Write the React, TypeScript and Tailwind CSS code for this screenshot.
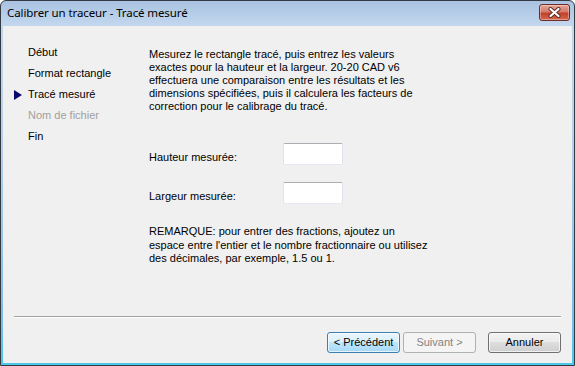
import type { ReactNode } from 'react';

const steps = [
  { label: 'Début', state: 'done' },
  { label: 'Format rectangle', state: 'done' },
  { label: 'Tracé mesuré', state: 'current' },
  { label: 'Nom de fichier', state: 'disabled' },
  { label: 'Fin', state: 'todo' },
];

function CloseButton() {
  return (
    <div className="mt-[3px] w-[31px] h-[17px] rounded-[3px] border border-[#6b2d26] bg-[linear-gradient(to_bottom,#e6a597,#d47a68_45%,#c2402c_55%,#d26a50)] flex items-center justify-center shadow-[inset_0_0_0_1px_rgba(255,255,255,0.35)]">
      <svg width="13" height="11" viewBox="0 0 13 11">
        <path d="M2.5 2 L10.5 9 M10.5 2 L2.5 9" stroke="#5a2a24" strokeWidth="4" strokeLinecap="round" />
        <path d="M2.5 2 L10.5 9 M10.5 2 L2.5 9" stroke="#ffffff" strokeWidth="2.2" strokeLinecap="round" />
      </svg>
    </div>
  );
}

function WinButton({ children, variant }: { children: ReactNode; variant: 'default' | 'disabled' | 'normal' }) {
  const cls =
    variant === 'default'
      ? 'border-[#3c7fb1] bg-[linear-gradient(to_bottom,#eaf6fd,#d9f0fc_50%,#bee6fd_50%,#a7d9f5)] text-black shadow-[inset_0_0_0_1px_rgba(255,255,255,0.7)]'
      : variant === 'disabled'
      ? 'border-[#adb2b5] bg-[#f4f4f4] text-[#838383]'
      : 'border-[#707070] bg-[linear-gradient(to_bottom,#f2f2f2,#ebebeb_50%,#dddddd_50%,#cfcfcf)] text-black shadow-[inset_0_0_0_1px_rgba(255,255,255,0.7)]';
  return (
    <div className={`w-[73px] h-[21px] rounded-[3px] border flex items-center justify-center text-[11px] ${cls}`}>
      {children}
    </div>
  );
}

function TextBox() {
  return (
    <div className="w-[60px] h-[22px] rounded-[2px] border border-[#e2e3ea] border-t-[#abadb3] border-b-[#e3e9ef] bg-white" />
  );
}

export default function App() {
  return (
    <div className="w-[575px] h-[366px] font-['Liberation_Sans',Arial,sans-serif] text-black">
      <div className="w-full h-full rounded-t-[6px] border border-[#343a42] bg-[linear-gradient(to_bottom,#a9c2e0,#c2d7ee_24px,#b5d0ec_40%,#80bde6_85%,#4cc6ea)] flex flex-col overflow-hidden">
        {/* Title bar */}
        <div className="h-[25px] shrink-0 flex items-start justify-between pl-[6px] pr-[4px]">
          <div className="pt-[4px] text-[11.5px] leading-[16px] font-['Noto_Sans',sans-serif] tracking-[-0.1px]">
            Calibrer un traceur - Tracé mesuré
          </div>
          <CloseButton />
        </div>

        {/* Client area */}
        <div className="flex-1 mx-[2px] mb-[2px] bg-[#f0f0f0] flex flex-col text-[11px]">
          <div className="h-[290px] flex">
            {/* Steps */}
            <div className="w-[146px] shrink-0 pt-[16px] pl-[11px]">
              {steps.map((s) => (
                <div key={s.label} className="h-[21px] flex items-center">
                  <div className="w-[14px] shrink-0 flex items-center">
                    {s.state === 'current' && (
                      <svg width="8" height="10" viewBox="0 0 8 10">
                        <polygon points="0,0 8,5 0,10" fill="#0a0a6e" />
                      </svg>
                    )}
                  </div>
                  <span className={s.state === 'disabled' ? 'text-[#a0a0a0]' : ''}>{s.label}</span>
                </div>
              ))}
            </div>

            {/* Page content */}
            <div className="flex-1 pt-[22px] leading-[13px] whitespace-nowrap">
              <p>
                Mesurez le rectangle tracé, puis entrez les valeurs
                <br />
                exactes pour la hauteur et la largeur. 20-20 CAD v6
                <br />
                effectuera une comparaison entre les résultats et les
                <br />
                dimensions spécifiées, puis il calculera les facteurs de
                <br />
                correction pour le calibrage du tracé.
              </p>

              <div className="mt-[30px] flex items-start">
                <div className="w-[134px] pt-[8px]">Hauteur mesurée:</div>
                <TextBox />
              </div>
              <div className="mt-[17px] flex items-start">
                <div className="w-[134px] pt-[8px]">Largeur mesurée:</div>
                <TextBox />
              </div>

              <p className="mt-[21px] leading-[13.5px]">
                REMARQUE: pour entrer des fractions, ajoutez un
                <br />
                espace entre l'entier et le nombre fractionnaire ou utilisez
                <br />
                des décimales, par exemple, 1.5 ou 1.
              </p>
            </div>
          </div>

          <div className="mx-[11px] border-t border-[#a0a0a0] border-b border-b-white" />

          <div className="mt-[14px] pr-[11px] flex justify-end">
            <WinButton variant="default">&lt; Précédent</WinButton>
            <div className="ml-[3px]">
              <WinButton variant="disabled">Suivant &gt;</WinButton>
            </div>
            <div className="ml-[12px]">
              <WinButton variant="normal">Annuler</WinButton>
            </div>
          </div>
        </div>
      </div>
    </div>
  );
}
